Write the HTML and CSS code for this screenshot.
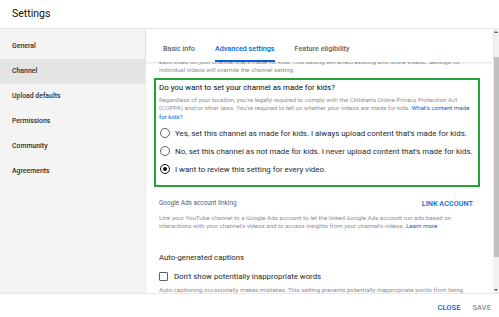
FILE: index.html
```html
<!DOCTYPE html>
<html lang="en">
<head>
  <meta charset="UTF-8" />
  <title>Settings</title>
  <link rel="stylesheet" href="styles.css">
</head>
<body>
  <div class="dialog">
    <div class="header">Settings</div>

    <div class="body">
      <div class="sidebar">
        <div class="nav-item">General</div>
        <div class="nav-item active">Channel</div>
        <div class="nav-item">Upload defaults</div>
        <div class="nav-item">Permissions</div>
        <div class="nav-item">Community</div>
        <div class="nav-item">Agreements</div>
      </div>

      <div class="main">
        <div class="tabs">
          <div class="tab">Basic info</div>
          <div class="tab active">Advanced settings</div>
          <div class="tab">Feature eligibility</div>
        </div>

        <div class="scroll">
          <div class="content">
            <p class="muted">each video on your channel that's made for kids. This setting will affect existing and future videos. Settings for individual videos will override the channel setting.</p>

            <div class="kids-box">
              <div class="question">Do you want to set your channel as made for kids?</div>
              <p class="muted">Regardless of your location, you're legally required to comply with the Children's Online Privacy Protection Act (COPPA) and/or other laws. You're required to tell us whether your videos are made for kids. <a class="link">What's content made for kids?</a></p>
              <div class="radio-row"><span class="radio"></span>Yes, set this channel as made for kids. I always upload content that's made for kids.</div>
              <div class="radio-row"><span class="radio"></span>No, set this channel as not made for kids. I never upload content that's made for kids.</div>
              <div class="radio-row"><span class="radio checked"></span>I want to review this setting for every video.</div>
            </div>

            <div class="ads">
              <div class="ads-head">
                <span class="label">Google Ads account linking</span>
                <span class="link-btn">LINK ACCOUNT</span>
              </div>
              <p class="muted">Link your YouTube channel to a Google Ads account to let the linked Google Ads account run ads based on interactions with your channel's videos and to access insights from your channel's videos. <a class="link">Learn more</a></p>
            </div>

            <div class="captions">
              <div class="section-title">Auto-generated captions</div>
              <div class="check-row"><span class="checkbox"></span>Don't show potentially inappropriate words</div>
              <p class="muted">Auto-captioning occasionally makes mistakes. This setting prevents potentially inappropriate words from being shown.</p>
            </div>
          </div>
        </div>
      </div>

      <div class="scrollbar">
        <div class="arrow up"></div>
        <div class="thumb"></div>
        <div class="arrow down"></div>
      </div>
    </div>

    <div class="footer">
      <span class="btn primary">CLOSE</span>
      <span class="btn disabled">SAVE</span>
    </div>
  </div>
</body>
</html>
```

FILE: styles.css
```css
body {
  margin: 0;
  font-family: Roboto, "Noto Sans", sans-serif;
  color: #0d0d0d;
  background: #fff;
  overflow: hidden;
}

.dialog {
  width: 499px;
  height: 317px;
  display: flex;
  flex-direction: column;
}

.header {
  height: 29px;
  line-height: 27px;
  padding-left: 12px;
  font-size: 10.5px;
  border-bottom: 1px solid #e8e8e8;
  box-sizing: border-box;
}

.body {
  flex: 1;
  display: flex;
  min-height: 0;
}

.sidebar {
  width: 146px;
  background: #f4f4f4;
  padding-top: 5px;
  box-sizing: border-box;
  border-right: 1px solid #ececec;
}

.nav-item {
  height: 25px;
  line-height: 25px;
  padding-left: 12px;
  font-size: 6.9px;
  font-weight: 500;
  color: #303030;
}

.nav-item.active {
  background: #e4e4e4;
}

.main {
  flex: 1;
  display: flex;
  flex-direction: column;
  min-width: 0;
}

.tabs {
  height: 33px;
  display: flex;
  gap: 20px;
  padding-left: 17px;
  box-shadow: 0 1px 2px rgba(0, 0, 0, 0.12);
  position: relative;
  z-index: 1;
}

.tab {
  display: flex;
  align-items: center;
  padding-top: 7px;
  border-bottom: 2px solid transparent;
  font-size: 7.2px;
  font-weight: 500;
  color: #606060;
}

.tab.active {
  color: #065fd4;
  border-bottom-color: #065fd4;
}

.scroll {
  flex: 1;
  overflow: hidden;
}

.content {
  margin-top: -4px;
  padding: 0 13px 0 13px;
}

.muted {
  margin: 0;
  font-size: 6.2px;
  line-height: 8.4px;
  color: #909090;
}

.link {
  color: #065fd4;
}

.kids-box {
  margin: 3px 0 0 -5px;
  border: 2px solid #22a33c;
  padding: 2px 8px 7px 3px;
}

.question {
  font-size: 7.9px;
  line-height: 11px;
  color: #0d0d0d;
  margin-bottom: 3px;
}

.radio-row {
  display: flex;
  align-items: center;
  height: 18px;
  font-size: 7.9px;
  color: #282828;
  white-space: nowrap;
}

.kids-box .muted + .radio-row {
  margin-top: 3px;
}

.radio {
  width: 8px;
  height: 8px;
  border: 1.2px solid #606060;
  border-radius: 50%;
  margin: 0 5px 0 1px;
  flex: none;
  position: relative;
}

.radio.checked {
  border-color: #0d0d0d;
}

.radio.checked::after {
  content: "";
  position: absolute;
  inset: 1.6px;
  border-radius: 50%;
  background: #0d0d0d;
}

.ads {
  margin-top: 11px;
}

.ads-head {
  display: flex;
  justify-content: space-between;
  align-items: center;
  height: 10px;
  margin-bottom: 6px;
}

.label {
  font-size: 6.4px;
  color: #606060;
}

.link-btn {
  font-size: 7.3px;
  font-weight: 500;
  color: #065fd4;
  margin-right: 7px;
}

.captions {
  margin-top: 22px;
}

.section-title {
  font-size: 7.8px;
  color: #282828;
  line-height: 10px;
}

.check-row {
  display: flex;
  align-items: center;
  height: 19px;
  margin-top: 4px;
  font-size: 7.8px;
  color: #282828;
}

.checkbox {
  width: 7px;
  height: 7px;
  border: 1.2px solid #606060;
  border-radius: 1px;
  margin-right: 6px;
  flex: none;
}

.scrollbar {
  width: 6px;
  background: #f1f1f1;
  display: flex;
  flex-direction: column;
  align-items: center;
}

.arrow {
  width: 0;
  height: 0;
  border-left: 2px solid transparent;
  border-right: 2px solid transparent;
  margin: 2px 0;
}

.arrow.up {
  border-bottom: 2px solid #505050;
}

.arrow.down {
  border-top: 2px solid #505050;
}

.thumb {
  width: 5px;
  margin-top: 22px;
  flex: 1;
  background: #c1c1c1;
  margin-bottom: 30px;
}

.footer {
  height: 24px;
  border-top: 1px solid #e8e8e8;
  display: flex;
  justify-content: flex-end;
  align-items: center;
  gap: 12px;
  padding: 4px 8px 0 0;
  box-sizing: border-box;
}

.btn {
  font-size: 7.6px;
  font-weight: 500;
}

.btn.primary {
  color: #065fd4;
}

.btn.disabled {
  color: #909090;
}
```
